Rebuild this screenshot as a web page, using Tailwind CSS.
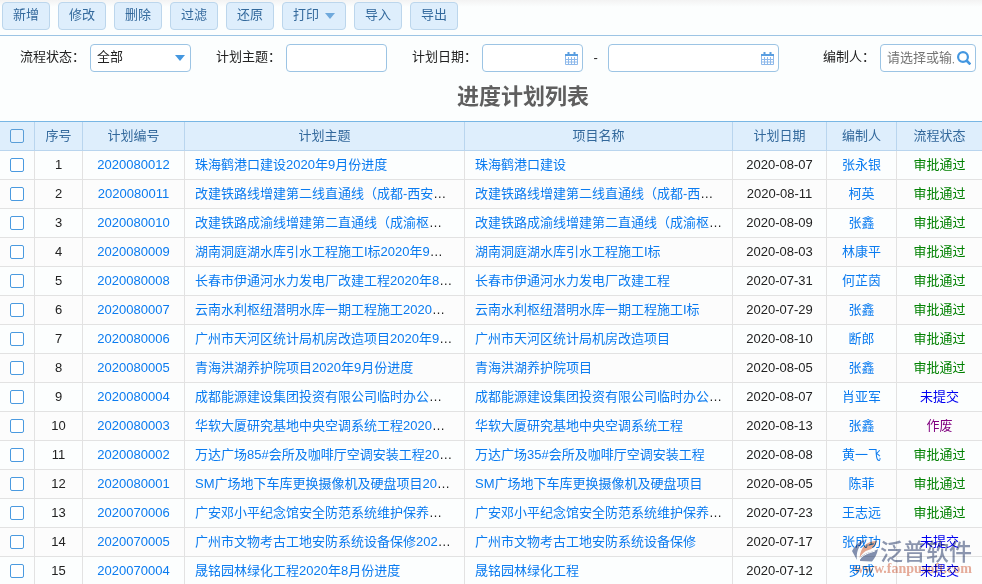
<!DOCTYPE html>
<html lang="zh-CN">
  <head>
    <meta charset="UTF-8" />
    <meta name="viewport" content="width=device-width, initial-scale=1.0" />
    <title>进度计划列表</title>
    <script src="https://cdn.jsdelivr.net/npm/@tailwindcss/browser@4"></script>
  </head>
  <body class="relative h-screen overflow-hidden bg-[#fcfefe] font-['Liberation_Sans','Noto_Sans_CJK_SC',sans-serif] text-[13px] leading-5 text-[#222]">
    <nav class="flex gap-2 border-b border-[#9cc4e4] bg-linear-to-b from-[#f3f3f3] to-[#fcfefe] to-20% px-0.5 pt-0.5 pb-[5px]">
      <button type="button" class="h-7 rounded border border-[#bcd6ec] bg-[#deeefc] px-[10px] pb-0.5 text-[#33699c] hover:bg-[#cfe5f9]">新增</button>
      <button type="button" class="h-7 rounded border border-[#bcd6ec] bg-[#deeefc] px-[10px] pb-0.5 text-[#33699c] hover:bg-[#cfe5f9]">修改</button>
      <button type="button" class="h-7 rounded border border-[#bcd6ec] bg-[#deeefc] px-[10px] pb-0.5 text-[#33699c] hover:bg-[#cfe5f9]">删除</button>
      <button type="button" class="h-7 rounded border border-[#bcd6ec] bg-[#deeefc] px-[10px] pb-0.5 text-[#33699c] hover:bg-[#cfe5f9]">过滤</button>
      <button type="button" class="h-7 rounded border border-[#bcd6ec] bg-[#deeefc] px-[10px] pb-0.5 text-[#33699c] hover:bg-[#cfe5f9]">还原</button>
      <button type="button" class="flex h-7 items-center gap-[6px] rounded border border-[#bcd6ec] bg-[#deeefc] px-[10px] pb-0.5 text-[#33699c] hover:bg-[#cfe5f9]">
        打印
        <svg class="mt-0.5 h-[6px] w-[10px]" viewBox="0 0 10 6" fill="#6fa9dc"><path d="M0 0h10L5 6z" /></svg>
      </button>
      <button type="button" class="h-7 rounded border border-[#bcd6ec] bg-[#deeefc] px-[10px] pb-0.5 text-[#33699c] hover:bg-[#cfe5f9]">导入</button>
      <button type="button" class="h-7 rounded border border-[#bcd6ec] bg-[#deeefc] px-[10px] pb-0.5 text-[#33699c] hover:bg-[#cfe5f9]">导出</button>
    </nav>

    <form class="flex items-center gap-[25px] pt-2 pr-[6px] pl-5">
      <div class="flex items-center gap-[5px]">
        <label for="status" class="pb-0.5">流程状态：</label>
        <div class="relative">
          <select id="status" class="h-7 w-[101px] appearance-none rounded border border-[#9cc4e4] bg-white px-[6px] pb-0.5">
            <option>全部</option>
            <option>审批通过</option>
            <option>未提交</option>
            <option>作废</option>
          </select>
          <svg class="pointer-events-none absolute top-[11px] right-[6px] h-[6px] w-[10px]" viewBox="0 0 10 6" fill="#4497e0"><path d="M0 0h10L5 6z" /></svg>
        </div>
      </div>
      <div class="flex items-center gap-[5px]">
        <label for="theme" class="pb-0.5">计划主题：</label>
        <input id="theme" type="text" class="h-7 w-[101px] rounded border border-[#9cc4e4] bg-white px-[6px]" />
      </div>
      <div class="flex items-center gap-[5px]">
        <label for="dateFrom" class="pb-0.5">计划日期：</label>
        <div class="relative">
          <input id="dateFrom" type="text" class="h-7 w-[101px] rounded border border-[#9cc4e4] bg-white pr-6 pl-[6px]" />
          <svg class="pointer-events-none absolute top-2 right-[5px] h-[13px] w-[13px]" viewBox="0 0 13 13" fill="none">
            <path d="M.5 3.5h12v9H.5zM3.5 5v7.500M6.500 5v7.500M9.500 5v7.500M1 7.500h11M1 10h11" stroke="#8fb9ea" />
            <path d="M0 3h13" stroke="#5a9ee0" stroke-width="2" />
            <path d="M3.500 0v3M9.500 0v3" stroke="#5a9ee0" stroke-width="2" />
          </svg>
        </div>
        <label for="dateTo" class="w-[15px] text-center">-</label>
        <div class="relative">
          <input id="dateTo" type="text" class="h-7 w-[171px] rounded border border-[#9cc4e4] bg-white pr-6 pl-[6px]" />
          <svg class="pointer-events-none absolute top-2 right-[5px] h-[13px] w-[13px]" viewBox="0 0 13 13" fill="none">
            <path d="M.5 3.5h12v9H.5zM3.5 5v7.500M6.500 5v7.500M9.500 5v7.500M1 7.500h11M1 10h11" stroke="#8fb9ea" />
            <path d="M0 3h13" stroke="#5a9ee0" stroke-width="2" />
            <path d="M3.500 0v3M9.500 0v3" stroke="#5a9ee0" stroke-width="2" />
          </svg>
        </div>
      </div>
      <div class="ml-auto flex items-center gap-[5px]">
        <label for="author" class="pb-0.5">编制人：</label>
        <div class="relative">
          <input id="author" type="text" placeholder="请选择或输入" class="h-7 w-24 rounded border border-[#9cc4e4] bg-white pr-[21px] pb-0.5 pl-[6px] placeholder:text-[#757575]" />
          <svg class="pointer-events-none absolute top-[7px] right-[5px] h-[14px] w-[14px]" viewBox="0 0 14 14" fill="none" stroke="#4497e0" stroke-width="2.200">
            <circle cx="6" cy="6" r="4.900" />
            <path d="M9.500 9.500l3.900 3.900" stroke-width="2.600" />
          </svg>
        </div>
      </div>
    </form>

    <h1 class="py-[10px] pl-16 text-center text-[22px] leading-[29px] font-bold text-[#5f5f5f]">进度计划列表</h1>

    <table class="w-full table-fixed border-separate border-spacing-0 border-t border-[#78b6e4] text-center">
      <colgroup>
        <col class="w-[35px]" />
        <col class="w-12" />
        <col class="w-[102px]" />
        <col />
        <col class="w-[268px]" />
        <col class="w-[94px]" />
        <col class="w-[70px]" />
        <col class="w-[85px]" />
      </colgroup>
      <thead class="bg-[#deeefc] text-[#33699c]">
        <tr>
          <th class="h-[29px] border-r border-b border-[#b9d5ee] p-0">
            <input type="checkbox" aria-label="全选" class="mx-auto block h-[14px] w-[14px] appearance-none rounded-xs border border-[#5a9ed8] bg-[#e6f2fd] checked:bg-[#4a9ae0]" />
          </th>
          <th class="border-r border-b border-[#b9d5ee] p-0 font-normal">序号</th>
          <th class="border-r border-b border-[#b9d5ee] p-0 font-normal">计划编号</th>
          <th class="border-r border-b border-[#b9d5ee] p-0 font-normal">计划主题</th>
          <th class="border-r border-b border-[#b9d5ee] p-0 font-normal">项目名称</th>
          <th class="border-r border-b border-[#b9d5ee] p-0 font-normal">计划日期</th>
          <th class="border-r border-b border-[#b9d5ee] p-0 font-normal">编制人</th>
          <th class="border-b border-[#b9d5ee] p-0 font-normal">流程状态</th>
        </tr>
      </thead>
      <tbody id="planRows"></tbody>
    </table>

    <div class="pointer-events-none absolute right-[10px] bottom-2 h-[37px] w-[120px] mix-blend-multiply">
      <svg class="absolute top-0 left-0 h-[26px] w-[27px]" viewBox="0 0 27 26">
        <path d="M10 1.500C6 4 2 8 0 12l5 9C4 14 6 7 13 1.500z" fill="#8491b0" />
        <path d="M25 2C15 2 9 7 7.500 19c2-4 5-7 9-8 4-1 6.500-4 8.500-9z" fill="#e6a890" />
        <path d="M26 10c-4 3-12 3-16 7-1.500 1.500-2 3.500-2 5l12 .500c3-3.500 5-7 6-12.500z" fill="#8491b0" />
        <path d="M8 20c4-5 9-6 15-8" fill="none" stroke="#fcfefe" />
      </svg>
      <span class="absolute top-0 right-0 text-[23px] leading-[26px] font-medium whitespace-nowrap text-[#8d97b0]">泛普软件</span>
      <span class="absolute right-0 bottom-0 font-['Liberation_Serif',serif] text-[14px] leading-[14px] font-bold whitespace-nowrap text-[#e8ac9a]">www.fanpusoft.com</span>
    </div>

    <script>
      const plans = [
        ['2020080012', '珠海鹤港口建设2020年9月份进度', '珠海鹤港口建设', '2020-08-07', '张永银', '审批通过'],
        ['2020080011', '改建铁路线增建第二线直通线（成都-西安）2020年8月份进度', '改建铁路线增建第二线直通线（成都-西安）', '2020-08-11', '柯英', '审批通过'],
        ['2020080010', '改建铁路成渝线增建第二直通线（成渝枢纽）2020年8月份进度', '改建铁路成渝线增建第二直通线（成渝枢纽）', '2020-08-09', '张鑫', '审批通过'],
        ['2020080009', '湖南洞庭湖水库引水工程施工I标2020年9月份进度', '湖南洞庭湖水库引水工程施工I标', '2020-08-03', '林康平', '审批通过'],
        ['2020080008', '长春市伊通河水力发电厂改建工程2020年8月份进度', '长春市伊通河水力发电厂改建工程', '2020-07-31', '何芷茵', '审批通过'],
        ['2020080007', '云南水利枢纽潜明水库一期工程施工2020年8月份进度', '云南水利枢纽潜明水库一期工程施工I标', '2020-07-29', '张鑫', '审批通过'],
        ['2020080006', '广州市天河区统计局机房改造项目2020年9月份进度', '广州市天河区统计局机房改造项目', '2020-08-10', '断郎', '审批通过'],
        ['2020080005', '青海洪湖养护院项目2020年9月份进度', '青海洪湖养护院项目', '2020-08-05', '张鑫', '审批通过'],
        ['2020080004', '成都能源建设集团投资有限公司临时办公室装修', '成都能源建设集团投资有限公司临时办公室装修', '2020-08-07', '肖亚军', '未提交'],
        ['2020080003', '华软大厦研究基地中央空调系统工程2020年8月份进度', '华软大厦研究基地中央空调系统工程', '2020-08-13', '张鑫', '作废'],
        ['2020080002', '万达广场85#会所及咖啡厅空调安装工程2020年8月份进度', '万达广场35#会所及咖啡厅空调安装工程', '2020-08-08', '黄一飞', '审批通过'],
        ['2020080001', 'SM广场地下车库更换摄像机及硬盘项目2020年8月份进度', 'SM广场地下车库更换摄像机及硬盘项目', '2020-08-05', '陈菲', '审批通过'],
        ['2020070006', '广安邓小平纪念馆安全防范系统维护保养项目', '广安邓小平纪念馆安全防范系统维护保养项目', '2020-07-23', '王志远', '审批通过'],
        ['2020070005', '广州市文物考古工地安防系统设备保修2020年7月份进度', '广州市文物考古工地安防系统设备保修', '2020-07-17', '张成功', '未提交'],
        ['2020070004', '晟铭园林绿化工程2020年8月份进度', '晟铭园林绿化工程', '2020-07-12', '罗成', '未提交'],
      ];
      const statusColor = { '审批通过': 'text-[#008000]', '未提交': 'text-[#0000f0]', '作废': 'text-[#800080]' };

      document.getElementById('planRows').innerHTML = plans.map(([no, theme, project, date, author, status], i) => `
        <tr class="even:bg-[#fcfcfc]">
          <td class="h-[29px] border-r border-b border-[#e2e2e2] p-0">
            <input type="checkbox" aria-label="选择 ${no}" class="mx-auto block h-[14px] w-[14px] appearance-none rounded-xs border border-[#4a9ae0] bg-white checked:bg-[#4a9ae0]" />
          </td>
          <td class="border-r border-b border-[#e2e2e2] p-0">${i + 1}</td>
          <td class="border-r border-b border-[#e2e2e2] p-0"><a href="#" class="text-[#0a7bf0]">${no}</a></td>
          <td class="truncate border-r border-b border-[#e2e2e2] px-[10px] py-0 text-left"><a href="#" class="text-[#0a7bf0]">${theme}</a></td>
          <td class="truncate border-r border-b border-[#e2e2e2] py-0 pr-2 pl-[10px] text-left"><a href="#" class="text-[#0a7bf0]">${project}</a></td>
          <td class="border-r border-b border-[#e2e2e2] p-0">${date}</td>
          <td class="border-r border-b border-[#e2e2e2] p-0"><a href="#" class="text-[#0a7bf0]">${author}</a></td>
          <td class="border-b border-[#e2e2e2] p-0 ${statusColor[status]}">${status}</td>
        </tr>`).join('');
    </script>
  </body>
</html>
